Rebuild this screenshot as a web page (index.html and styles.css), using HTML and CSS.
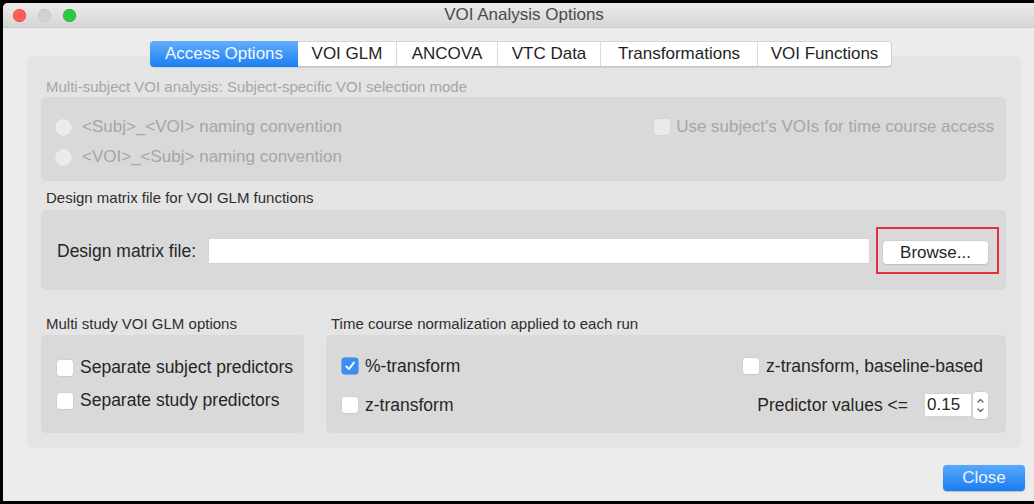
FILE: index.html
```html
<!DOCTYPE html>
<html>
<head>
<meta charset="utf-8">
<title>VOI Analysis Options</title>
<link rel="stylesheet" href="styles.css">
</head>
<body>
<div class="window">
  <div class="titlebar">
    <div class="lights">
      <span class="light red"></span>
      <span class="light gray"></span>
      <span class="light green"></span>
    </div>
    <div class="title">VOI Analysis Options</div>
    <div></div>
  </div>
  <div class="content">
    <div class="tabs">
      <div class="tab selected">Access Options</div>
      <div class="tab">VOI GLM</div>
      <div class="tab">ANCOVA</div>
      <div class="tab">VTC Data</div>
      <div class="tab">Transformations</div>
      <div class="tab">VOI Functions</div>
    </div>
    <div class="tabbox">
      <div class="section-label disabled">Multi-subject VOI analysis: Subject-specific VOI selection mode</div>
      <div class="box box-voi">
        <div class="radios">
          <div class="row"><span class="radio"></span><span class="disabled">&lt;Subj&gt;_&lt;VOI&gt; naming convention</span></div>
          <div class="row"><span class="radio"></span><span class="disabled">&lt;VOI&gt;_&lt;Subj&gt; naming convention</span></div>
        </div>
        <div class="row"><span class="check check-disabled"></span><span class="disabled">Use subject's VOIs for time course access</span></div>
      </div>

      <div class="section-label label-design">Design matrix file for VOI GLM functions</div>
      <div class="box box-design">
        <span class="field-label">Design matrix file:</span>
        <div class="text-input"></div>
        <div class="highlight">
          <button class="btn">Browse...</button>
        </div>
      </div>

      <div class="bottom-grid">
        <div class="col">
          <div class="section-label">Multi study VOI GLM options</div>
          <div class="box box-multi">
            <div class="row r33"><span class="check"></span><span>Separate subject predictors</span></div>
            <div class="row r33"><span class="check"></span><span>Separate study predictors</span></div>
          </div>
        </div>
        <div class="col">
          <div class="section-label">Time course normalization applied to each run</div>
          <div class="box box-norm">
            <div class="norm-left">
              <div class="row r38"><span class="check checked"><svg viewBox="0 0 16 16" width="16" height="16"><path d="M4.2 8.4 L7 11.2 L11.8 4.6" fill="none" stroke="#fff" stroke-width="1.9" stroke-linecap="round" stroke-linejoin="round"/></svg></span><span>%-transform</span></div>
              <div class="row r38 lower"><span class="check"></span><span>z-transform</span></div>
            </div>
            <div class="norm-right">
              <div class="row r38 base"><span class="check"></span><span>z-transform, baseline-based</span></div>
              <div class="row r38">
                <span class="pred-label">Predictor values &lt;=</span>
                <div class="spin-field">0.15</div>
                <div class="stepper">
                  <svg viewBox="0 0 15 27" width="15" height="27"><path d="M5 10 L7.5 7.5 L10 10" fill="none" stroke="#666" stroke-width="1.3" stroke-linecap="round" stroke-linejoin="round"/><path d="M5 17 L7.5 19.5 L10 17" fill="none" stroke="#666" stroke-width="1.3" stroke-linecap="round" stroke-linejoin="round"/></svg>
                </div>
              </div>
            </div>
          </div>
        </div>
      </div>
    </div>
    <button class="btn-close">Close</button>
  </div>
</div>
</body>
</html>
```

FILE: styles.css
```css
* { box-sizing: border-box; }
html, body { margin: 0; padding: 0; }
body {
  background: #000;
  width: 1034px;
  height: 504px;
  overflow: hidden;
  font-family: "Liberation Sans", Arial, sans-serif;
  font-size: 17px;
  color: #262626;
}
.window {
  margin: 3px 0 0 3px;
  height: 498px;
  background: #ececec;
  border-top-left-radius: 5px;
  display: flex;
  flex-direction: column;
  overflow: hidden;
}
.titlebar {
  height: 25px;
  flex: none;
  display: grid;
  grid-template-columns: 1fr auto 1fr;
  align-items: center;
  background: linear-gradient(#ebebeb, #d6d6d6);
  border-bottom: 1px solid #c9c9c9;
}
.lights { display: flex; gap: 12px; padding-left: 10px; }
.light { width: 13px; height: 13px; border-radius: 50%; display: block; }
.red { background: #fc5f57; box-shadow: inset 0 0 0 0.5px #de4840; }
.gray { background: #d2d2d2; box-shadow: inset 0 0 0 0.5px #bdbdbd; }
.green { background: #2ec845; box-shadow: inset 0 0 0 0.5px #24a637; }
.title { font-size: 17px; color: #4a4a4a; padding-left: 11px; }

.content {
  flex: 1;
  display: flex;
  flex-direction: column;
  padding: 13px 9px 0 24px;
}
.tabs {
  display: flex;
  justify-content: center;
  margin: 0 4px -11px 0;
  position: relative;
  z-index: 1;
  padding-right: 6px;
}
.tab {
  height: 26px;
  display: flex;
  align-items: center;
  justify-content: center;
  background: #fff;
  color: #1f1f1f;
  border-top: 1px solid #d4d4d4;
  border-bottom: 1px solid #c4c4c4;
  border-right: 1px solid #dcdcdc;
  box-shadow: 0 1px 1px rgba(0,0,0,0.08);
  font-size: 17px;
}
.tab:nth-child(1) { width: 148px; }
.tab:nth-child(2) { width: 99px; }
.tab:nth-child(3) { width: 101px; }
.tab:nth-child(4) { width: 103px; }
.tab:nth-child(5) { width: 157px; }
.tab:nth-child(6) { width: 134px; border-radius: 0 4px 4px 0; border-right: 1px solid #d0d0d0; }
.tab.selected {
  background: linear-gradient(#62aefb, #1b7ef3);
  color: #f4f8ff;
  border: none;
  border-radius: 4px 0 0 4px;
}

.tabbox {
  margin-right: 4px;
  background: #e4e4e4;
  border-radius: 6px;
  padding: 23px 15px 15px 14px;
}
.section-label {
  font-size: 15px;
  line-height: 16px;
  height: 16px;
  padding-left: 5px;
  color: #2e2e2e;
  white-space: nowrap;
}
.disabled { color: #a6a6a6; }
.section-label.disabled { color: #a6a6a6; }
.box {
  background: #d9d9d9;
  border-radius: 5px;
}
.box-voi {
  margin-top: 2px;
  height: 84px;
  display: flex;
  justify-content: space-between;
  align-items: flex-start;
  padding: 15px 12px 0 14px;
}
.box-voi .row { height: 30px; }
.box-voi .check { margin-right: 6px; }
.row { display: flex; align-items: center; white-space: nowrap; }
.radio {
  width: 17px; height: 17px;
  border-radius: 50%;
  background: #ebebeb;
  box-shadow: 0 0 0 0.5px #cfcfcf;
  margin-right: 10px;
  flex: none;
}
.check {
  width: 16px; height: 16px;
  border-radius: 3px;
  background: #fff;
  box-shadow: 0 0 0 0.5px #c9c9c9, 0 1px 1px rgba(0,0,0,0.06);
  margin-right: 7px;
  flex: none;
  display: block;
}
.check-disabled { background: #e9e9e9; box-shadow: 0 0 0 0.5px #d2d2d2; }
.check.checked { background: #3a8ef6; box-shadow: 0 0 0 0.5px #2e7de0; }
.check svg { display: block; }

.label-design { margin-top: 9px; }
.box-design {
  margin-top: 4px;
  height: 80px;
  display: flex;
  align-items: center;
  padding: 0 7px 0 16px;
}
.field-label { white-space: nowrap; margin-right: 13px; margin-top: 3px; font-size: 17.5px; }
.text-input {
  flex: 1;
  height: 24px;
  background: #fff;
  box-shadow: 0 0 0 0.5px #cfcfcf;
  margin-top: 1px;
  margin-right: 7px;
}
.highlight {
  border: 2px solid #e4303c;
  padding: 12px 9px 8px 5px;
  margin-top: 1px;
}
.btn {
  width: 105px;
  height: 23px;
  border: none;
  border-radius: 4px;
  background: #fff;
  box-shadow: 0 0 0 0.5px #c4c4c4, 0 1px 1px rgba(0,0,0,0.12);
  font-family: inherit;
  font-size: 17px;
  color: #262626;
  padding: 0;
  display: block;
}

.bottom-grid {
  margin-top: 26px;
  display: grid;
  grid-template-columns: 263px 1fr;
  column-gap: 22px;
}
.col .box { margin-top: 3px; }
.box-multi {
  height: 98px;
  padding: 16px 0 0 16px;
  font-size: 17.5px;
}
.r33 { height: 33px; }
.box-norm {
  height: 98px;
  display: flex;
  justify-content: space-between;
  padding: 12px 18px 0 16px;
  font-size: 17.5px;
}
.r38 { height: 38px; }
.norm-left .lower { padding-top: 2px; }
.norm-left .check { margin-right: 7px; }
.norm-right { display: flex; flex-direction: column; align-items: flex-end; }
.norm-right .base { margin-right: 5px; }
.pred-label { margin-right: 17px; margin-top: 2px; }
.spin-field {
  width: 46px; height: 22px;
  background: #fff;
  box-shadow: 0 0 0 0.5px #cfcfcf;
  padding-left: 2px;
  line-height: 22px;
  margin-top: 2px;
  font-size: 17px;
}
.stepper {
  width: 15px; height: 27px;
  margin-left: 2px;
  margin-top: 2px;
  background: #fff;
  border-radius: 4px;
  box-shadow: 0 0 0 0.5px #c9c9c9, 0 1px 1px rgba(0,0,0,0.1);
}
.stepper svg { display: block; }

.btn-close {
  align-self: flex-end;
  margin-top: 17px;
  width: 82px;
  height: 26px;
  border: none;
  border-radius: 4px;
  background: linear-gradient(#58a9fb, #1a7cf1);
  box-shadow: 0 0.5px 1px rgba(0,0,0,0.2);
  color: #eaf2ff;
  font-family: inherit;
  font-size: 17px;
  padding: 0;
}
```
